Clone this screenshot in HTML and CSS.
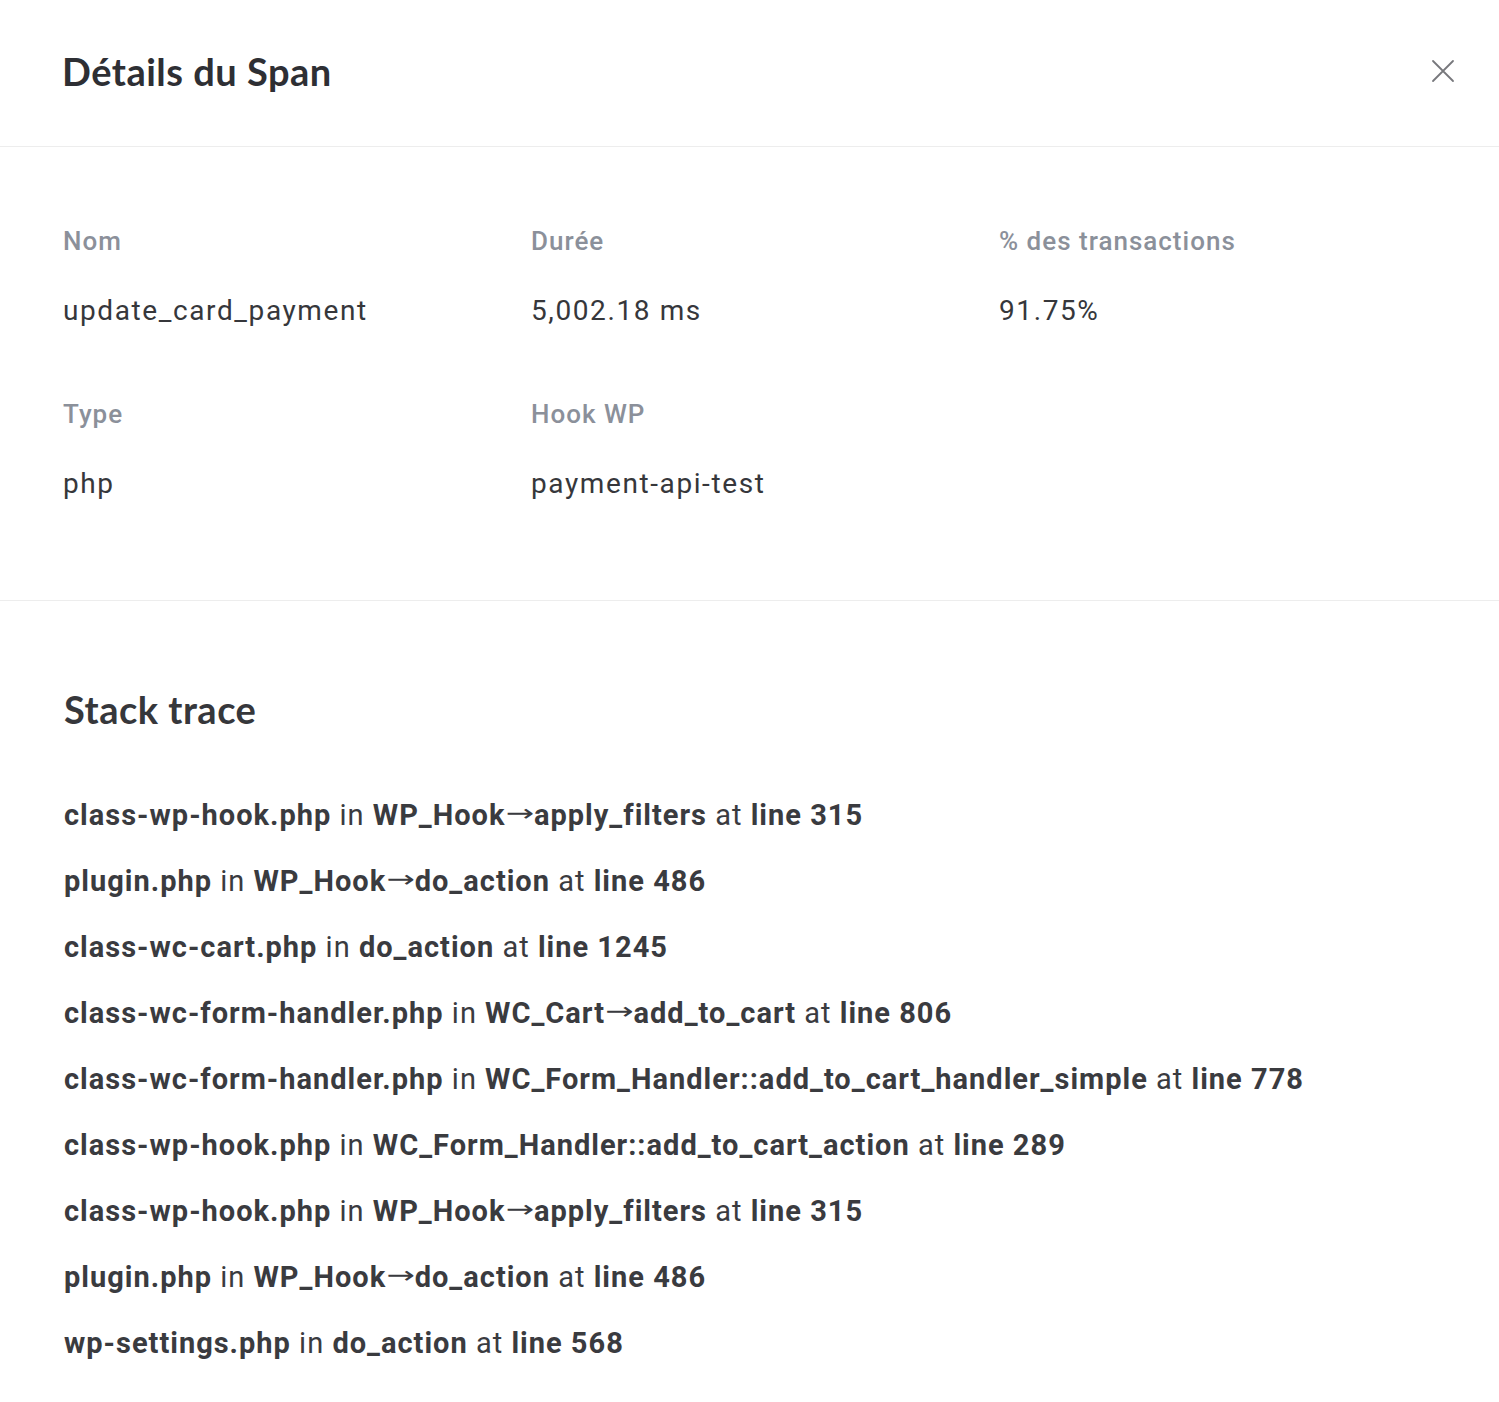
FILE: index.html
```html
<!DOCTYPE html>
<html lang="fr">
<head>
<meta charset="utf-8">
<title>Détails du Span</title>
<link rel="stylesheet" href="styles.css">
</head>
<body>
<div class="panel">
  <header class="header">
    <h1 class="title">Détails du Span</h1>
    <button class="close" aria-label="Fermer">
      <svg width="24" height="24" viewBox="0 0 24 24"><path d="M2 2L22 22M22 2L2 22" stroke="#77787c" stroke-width="1.8" fill="none" stroke-linecap="round"/></svg>
    </button>
  </header>
  <section class="details">
    <div class="grid">
      <div class="field"><div class="label">Nom</div><div class="value">update_card_payment</div></div>
      <div class="field"><div class="label">Durée</div><div class="value">5,002.18 ms</div></div>
      <div class="field"><div class="label">% des transactions</div><div class="value">91.75%</div></div>
      <div class="field"><div class="label">Type</div><div class="value">php</div></div>
      <div class="field"><div class="label">Hook WP</div><div class="value">payment-api-test</div></div>
    </div>
  </section>
  <section class="stack">
    <h2 class="stack-title">Stack trace</h2>
    <ul class="trace">
      <li><b>class-wp-hook.php</b> in <b>WP_Hook<span class="arr">→</span>apply_filters</b> at <b>line 315</b></li>
      <li><b>plugin.php</b> in <b>WP_Hook<span class="arr">→</span>do_action</b> at <b>line 486</b></li>
      <li><b>class-wc-cart.php</b> in <b>do_action</b> at <b>line 1245</b></li>
      <li><b>class-wc-form-handler.php</b> in <b>WC_Cart<span class="arr">→</span>add_to_cart</b> at <b>line 806</b></li>
      <li><b>class-wc-form-handler.php</b> in <b>WC_Form_Handler::add_to_cart_handler_simple</b> at <b>line 778</b></li>
      <li><b>class-wp-hook.php</b> in <b>WC_Form_Handler::add_to_cart_action</b> at <b>line 289</b></li>
      <li><b>class-wp-hook.php</b> in <b>WP_Hook<span class="arr">→</span>apply_filters</b> at <b>line 315</b></li>
      <li><b>plugin.php</b> in <b>WP_Hook<span class="arr">→</span>do_action</b> at <b>line 486</b></li>
      <li><b>wp-settings.php</b> in <b>do_action</b> at <b>line 568</b></li>
    </ul>
  </section>
</div>
</body>
</html>
```
FILE: styles.css
```css
* { box-sizing: border-box; }
html, body { margin: 0; padding: 0; background: #fff; }
body { font-family: Roboto, "Liberation Sans", sans-serif; color: #3a3b3f; }
.panel { width: 1499px; }
.header {
  height: 147px;
  display: flex;
  align-items: center;
  justify-content: space-between;
  padding: 0 44px 4px 62px;
  border-bottom: 1px solid #ededed;
}
.title {
  margin: 0;
  font-family: Lato, "Noto Sans", sans-serif;
  font-weight: 700;
  font-size: 38px;
  line-height: 44px;
  letter-spacing: 0.5px;
  color: #2e2f34;
}
.close {
  border: 0;
  background: none;
  padding: 0;
  width: 24px;
  height: 24px;
  display: flex;
}
.details {
  padding: 77px 0 96px 63px;
  border-bottom: 1px solid #ededed;
}
.grid {
  display: grid;
  grid-template-columns: 468px 468px 468px;
  row-gap: 66px;
}
.label {
  font-size: 26px;
  line-height: 34px;
  font-weight: 500;
  letter-spacing: 1px;
  color: #8b909a;
}
.value {
  margin-top: 33px;
  font-size: 28px;
  line-height: 40px;
  letter-spacing: 1.6px;
  color: #36373b;
}
.stack { padding: 86px 0 28px 64px; }
.stack-title {
  margin: 0;
  font-family: Lato, "Noto Sans", sans-serif;
  font-weight: 700;
  font-size: 38px;
  line-height: 44px;
  letter-spacing: 0.5px;
  color: #36373b;
}
.trace {
  list-style: none;
  margin: 51px 0 0;
  padding: 0;
}
.trace li {
  font-size: 29px;
  line-height: 66px;
  letter-spacing: 1px;
  color: #3a3b3f;
}
.trace b { font-weight: 700; }
.arr {
  display: inline-block;
  font-family: "DejaVu Sans", sans-serif;
  font-weight: 400;
  font-size: 34px;
  line-height: 20px;
  letter-spacing: 0;
  transform: scaleY(0.7);
}
```
